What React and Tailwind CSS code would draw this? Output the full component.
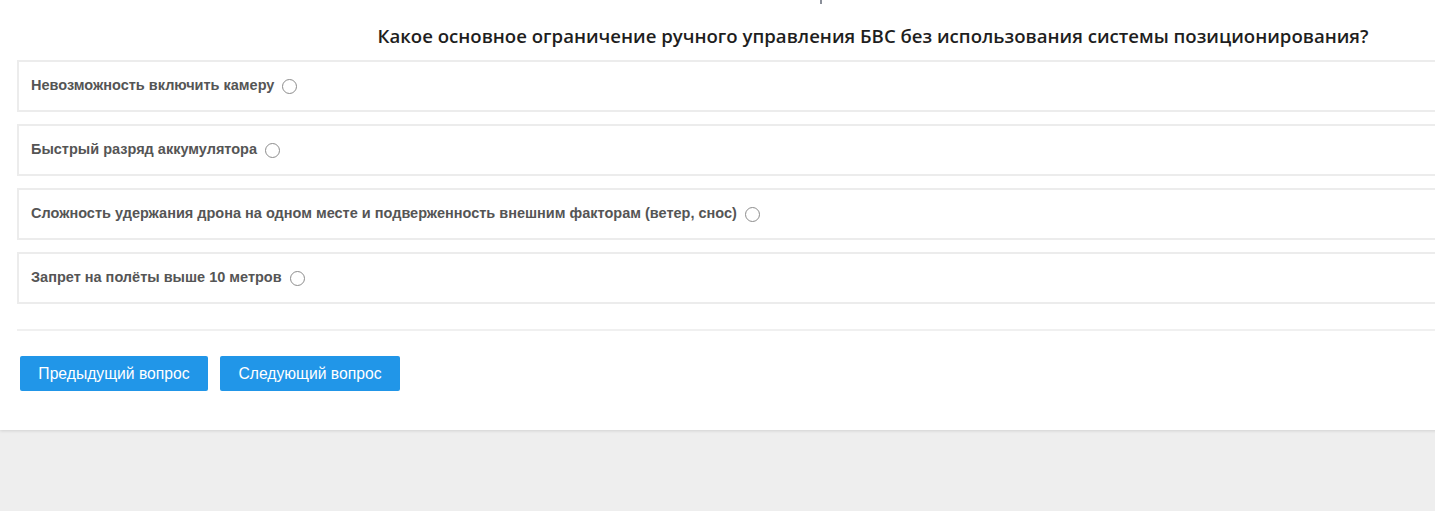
import React, { useState } from 'react';

const options = [
  'Невозможность включить камеру',
  'Быстрый разряд аккумулятора',
  'Сложность удержания дрона на одном месте и подверженность внешним факторам (ветер, снос)',
  'Запрет на полёты выше 10 метров',
];

const App = () => {
  const [selected, setSelected] = useState(null);

  return (
    <div className="w-full h-[511px] bg-[#eeeeee] overflow-hidden">
      <div className="relative w-[1746px] h-[430px] bg-white shadow-[0_1px_3px_rgba(0,0,0,0.12)]">
        {/* clipped descender of the line above */}
        <span className="absolute left-[820px] top-0 w-[2px] h-[4px] bg-[#8a8f99]" />

        {/* Question title */}
        <div className="pt-[24px] h-[60px] text-center font-['Open_Sans',sans-serif] font-semibold text-[18.6px] leading-[24px] text-[#1e1e1e]">
          Какое основное ограничение ручного управления БВС без использования системы позиционирования?
        </div>

        {/* Answers */}
        <div className="ml-[17px] flex flex-col gap-[12px]">
          {options.map((text, i) => (
            <label
              key={i}
              className="h-[52px] flex items-center border-2 border-[#ececec] px-[12px] cursor-pointer"
              onClick={() => setSelected(i)}
            >
              <span className="font-['Liberation_Sans',Arial,sans-serif] font-bold text-[14.5px] text-[#555555]">
                {text}
              </span>
              <span className="ml-[8px] w-[15px] h-[15px] rounded-full border-[1.5px] border-[#8c8c8c] flex items-center justify-center">
                {selected === i && <span className="w-[7px] h-[7px] rounded-full bg-[#555]" />}
              </span>
            </label>
          ))}
        </div>

        <div className="ml-[17px] mt-[25px] h-[2px] bg-[#f0f0f0]" />

        {/* Navigation buttons */}
        <div className="ml-[20px] mt-[25px] flex gap-[12px] font-['Liberation_Sans',Arial,sans-serif]">
          <button className="h-[35px] w-[188px] rounded-[2px] bg-[#2196e8] text-white text-[15.7px]">
            Предыдущий вопрос
          </button>
          <button className="h-[35px] w-[180px] rounded-[2px] bg-[#2196e8] text-white text-[15.7px]">
            Следующий вопрос
          </button>
        </div>
      </div>
    </div>
  );
};

export default App;
